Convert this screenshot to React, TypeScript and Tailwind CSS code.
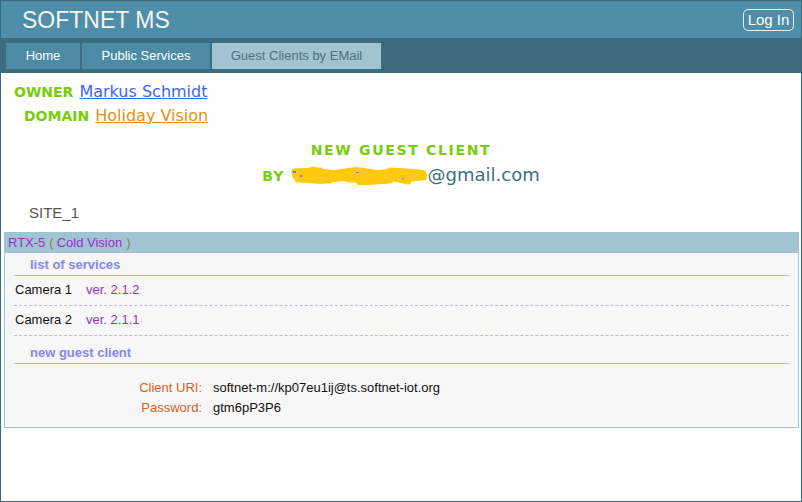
import React from 'react';

const verdana = "font-['DejaVu_Sans',Verdana,sans-serif]";
const arial = "font-['Liberation_Sans',Arial,sans-serif]";

function Redaction() {
  return (
    <svg width="138" height="19" viewBox="0 0 138 19" className="inline-block align-[-4px]">
      <path
        d="M2 3 L22 2 L44 4 L66 1 L88 4 L110 2 L134 4 L137 9 L136 14 L116 16 L96 14 L74 18 L52 15 L30 18 L8 16 L2 11 Z"
        fill="#ffc90e"
      />
      <path
        d="M5 6 L30 5 M22 4 L48 10 L70 5 M60 13 L92 9 L118 15 M100 5 L133 8 M8 13 L40 14 M70 16 L100 14"
        stroke="#ffc90e"
        strokeWidth="7"
        strokeLinecap="round"
        fill="none"
      />
      <rect x="3" y="5" width="3" height="2" fill="#5b86c9" />
      <rect x="10" y="9" width="2" height="2" fill="#5b86c9" />
      <rect x="66" y="6" width="3" height="1" fill="#5b86c9" />
      <rect x="112" y="12" width="2" height="1" fill="#5b86c9" />
    </svg>
  );
}

function SectionTitle({ children }: { children: React.ReactNode }) {
  return (
    <div className="pl-[16px] pt-[4px] pb-[2px] leading-[16px] text-[13px] font-bold text-[#8585ef] border-b border-[#b4b4ff]">
      {children}
    </div>
  );
}

function ServiceRow({ name, version }: { name: string; version: string }) {
  return (
    <div className="flex pl-[1px] pt-[6px] pb-[7px] leading-[16px] text-[13px] border-b border-dashed border-[#b8b8f8]">
      <span className="w-[71px] text-[#111]">{name}</span>
      <span className="text-[#9a2fd0]">{version}</span>
    </div>
  );
}

export default function App() {
  return (
    <div className="w-[802px] h-[502px] border border-[#3c6a7d] bg-white flex flex-col overflow-hidden">
      {/* header */}
      <div className="h-[37px] bg-[#4f8ea8] flex items-center justify-between pl-[21px] pr-[7px] shrink-0">
        <span className={`${arial} text-[23px] leading-none text-[#f4f4f4] mt-[1px]`}>SOFTNET MS</span>
        <button
          className={`${arial} h-[22px] w-[51px] border border-[#f0f0f0] rounded-[5px] text-[15px] leading-none text-white`}
        >
          Log In
        </button>
      </div>

      {/* tabs */}
      <div className={`${arial} h-[35px] bg-[#3e6b7e] flex gap-[2px] pl-[5px] pt-[5px] shrink-0`}>
        <div className="w-[74px] h-[26px] bg-[#4d8ba5] text-white text-[13px] flex items-center justify-center">
          Home
        </div>
        <div className="w-[128px] h-[26px] bg-[#4d8ba5] text-white text-[13px] flex items-center justify-center">
          Public Services
        </div>
        <div className="w-[169px] h-[26px] bg-[#a1c4d3] text-[#4f6f7b] text-[13px] flex items-center justify-center">
          Guest Clients by EMail
        </div>
      </div>

      {/* content */}
      <div className="flex-1 pt-[7px]">
        <div className={`${verdana} leading-[23px]`}>
          <div className="pl-[13px]">
            <span className="text-[14px] font-bold text-[#79cc0a]">OWNER</span>
            <a href="#" className="ml-[6px] text-[16px] text-[#3f63f2] underline">
              Markus Schmidt
            </a>
          </div>
          <div className="pl-[23px]">
            <span className="text-[14px] font-bold text-[#79cc0a]">DOMAIN</span>
            <a href="#" className="ml-[6px] text-[16px] text-[#e39012] underline">
              Holiday Vision
            </a>
          </div>
        </div>

        <div className={`${verdana} mt-[11px] text-center`}>
          <div className="leading-[22px] text-[14px] font-bold tracking-[0.12em] text-[#79cc0a]">
            NEW GUEST CLIENT
          </div>
          <div className="leading-[24px] mt-[2px]">
            <span className="text-[14px] font-bold tracking-[0.08em] text-[#79cc0a]">BY</span>{' '}
            <Redaction />
            <span className="text-[18px] text-[#3d6f82]">@gmail.com</span>
          </div>
        </div>

        <div className={`${arial} mt-[14px] pl-[28px] leading-[22px] text-[15px] text-[#555]`}>SITE_1</div>

        {/* device box */}
        <div className={`${arial} mt-[8px] ml-[3px] w-[795px] border border-[#a0c4d3] bg-[#f7f7f7]`}>
          <div className="h-[20px] bg-[#a1c4d3] pl-[3px] flex items-center text-[13px]">
            <span className="text-[#9a2fd0]">RTX-5</span>
            <span className="text-[#8f7f4f] ml-[4px]">(</span>
            <span className="text-[#9a2fd0] ml-[3px]">Cold Vision</span>
            <span className="text-[#8f7f4f] ml-[4px]">)</span>
          </div>
          <div className="px-[9px]">
            <SectionTitle>list of services</SectionTitle>
            <ServiceRow name="Camera 1" version="ver. 2.1.2" />
            <ServiceRow name="Camera 2" version="ver. 2.1.1" />
            <div className="pt-[5px]">
              <SectionTitle>new guest client</SectionTitle>
            </div>
          </div>
          <div className="pt-[14px] pb-[9px] text-[13px] leading-[20px]">
            <div className="flex">
              <span className="w-[197px] text-right text-[#d4621f]">Client URI:</span>
              <span className="ml-[11px] text-[#111]">softnet-m://kp07eu1ij@ts.softnet-iot.org</span>
            </div>
            <div className="flex">
              <span className="w-[197px] text-right text-[#d4621f]">Password:</span>
              <span className="ml-[11px] text-[#111]">gtm6pP3P6</span>
            </div>
          </div>
        </div>
      </div>
    </div>
  );
}
